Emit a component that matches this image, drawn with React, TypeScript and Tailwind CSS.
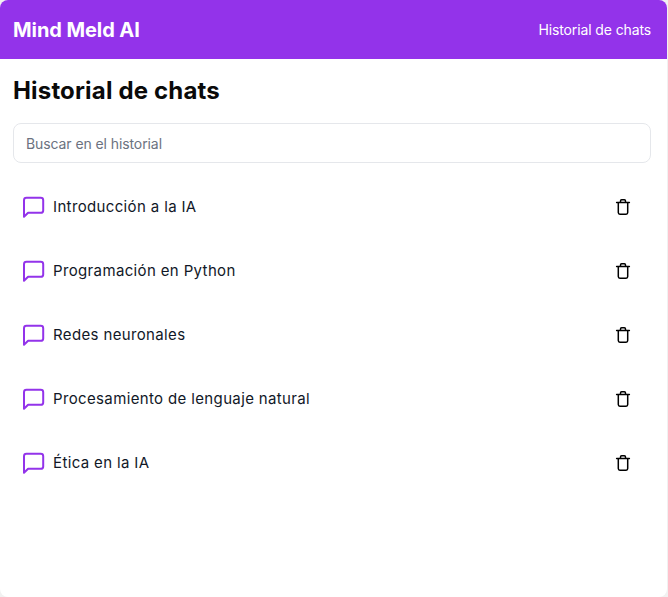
import React from "react";

const chats = [
  "Introducción a la IA",
  "Programación en Python",
  "Redes neuronales",
  "Procesamiento de lenguaje natural",
  "Ética en la IA",
];

const ChatIcon = () => (
  <svg width="24" height="24" viewBox="0 0 24 24" fill="none" className="shrink-0 text-[#9333ea]">
    <path
      d="M3 21.8V5.2C3 3.7 4.1 2.8 5.5 2.8h14.2c1.5 0 2.5 1 2.5 2.4v10.2c0 1.4-1 2.4-2.5 2.4H7.1z"
      stroke="currentColor"
      strokeWidth="2"
      strokeLinejoin="round"
    />
  </svg>
);

const TrashIcon = () => (
  <svg width="20" height="20" viewBox="0 0 20 20" fill="none" className="text-black">
    <path
      d="M3.6 5.4h12.8M5.3 5.4v10.2c0 1 .6 1.6 1.6 1.6h6.2c1 0 1.6-.6 1.6-1.6V5.4M7.5 5.4V3.9c0-.7.5-1.1 1.1-1.1h2.8c.6 0 1.1.4 1.1 1.1v1.5"
      stroke="currentColor"
      strokeWidth="1.5"
      strokeLinecap="round"
      strokeLinejoin="round"
    />
  </svg>
);

export default function App() {
  return (
    <div className="h-[597px] w-[668px] bg-[#f1f1f1] font-['Inter',sans-serif]">
      <div className="h-full w-[667px] overflow-hidden rounded-lg bg-white">
        <header className="flex h-[59px] items-center justify-between bg-[#9333ea] pl-[13px] pr-4 text-white">
          <h1 className="text-[20px] font-bold tracking-[-0.08px]">Mind Meld AI</h1>
          <span className="text-sm tracking-[-0.12px]">Historial de chats</span>
        </header>
        <main className="px-[13px]">
          <h2 className="mt-4 text-2xl font-bold leading-8 tracking-[0.17px] text-[#0a0a0a]">Historial de chats</h2>
          <input
            placeholder="Buscar en el historial"
            className="mt-4 block h-10 w-[638px] rounded-lg border border-[#e5e7eb] px-3 text-sm tracking-[-0.09px] outline-none placeholder:text-[#6b7280]"
          />
          <ul className="mt-3 w-[638px]">
            {chats.map(chat => (
              <li key={chat} className="flex h-16 items-center justify-between pl-2 pr-[18px]">
                <div className="flex items-center gap-2">
                  <ChatIcon />
                  <span className="text-[15px] tracking-[0.36px] text-[#111827]">{chat}</span>
                </div>
                <TrashIcon />
              </li>
            ))}
          </ul>
        </main>
      </div>
    </div>
  );
}
